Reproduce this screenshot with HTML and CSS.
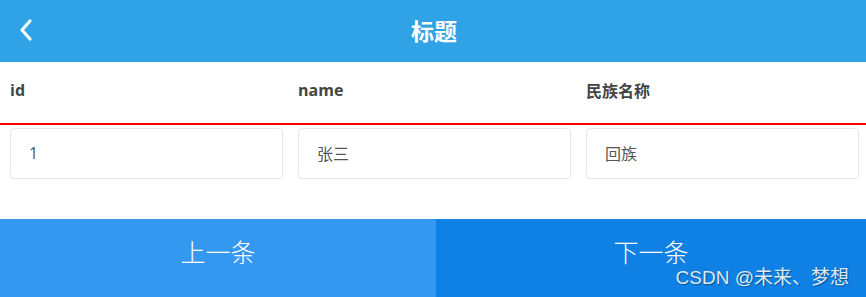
FILE: index.html
```html
<!DOCTYPE html>
<html lang="zh">
<head>
<meta charset="utf-8">
<link rel="stylesheet" href="styles.css">
</head>
<body>
<div class="page">
  <header class="nav">
    <svg class="back" width="16" height="24" viewBox="0 0 16 24"><path d="M12 3 L4 12 L12 21" fill="none" stroke="#fff" stroke-width="3.2" stroke-linecap="round" stroke-linejoin="round"/></svg>
    <h1 class="title">标题</h1>
  </header>
  <div class="thead">
    <div class="th">id</div>
    <div class="th">name</div>
    <div class="th">民族名称</div>
  </div>
  <div class="trow">
    <div class="cell"><div class="field">1</div></div>
    <div class="cell"><div class="field">张三</div></div>
    <div class="cell"><div class="field">回族</div></div>
  </div>
  <div class="spacer"></div>
  <footer class="actions">
    <button class="btn prev">上一条</button>
    <button class="btn next">下一条</button>
    <span class="watermark">CSDN @未来、梦想</span>
  </footer>
</div>
</body>
</html>
```
FILE: styles.css
```css
html, body {
  margin: 0;
  padding: 0;
  background: #fff;
  font-family: "Open Sans", "Noto Sans CJK SC", sans-serif;
}
.page {
  width: 866px;
  height: 297px;
  display: flex;
  flex-direction: column;
  overflow: hidden;
}
.nav {
  height: 62px;
  background: #2fa3e6;
  display: flex;
  align-items: center;
  justify-content: center;
  position: relative;
}
.back {
  position: absolute;
  left: 18px;
  top: 18px;
}
.title {
  margin: 0 0 2px 2px;
  color: #fff;
  font-size: 23px;
  font-weight: bold;
  font-family: "Noto Sans CJK SC", sans-serif;
}
.thead {
  height: 61px;
  display: grid;
  grid-template-columns: 288px 288px 290px;
  align-items: center;
  border-bottom: 2px solid #ff0000;
}
.th {
  padding-left: 10px;
  font-size: 16px;
  font-weight: bold;
  color: #444;
  padding-bottom: 6px;
}
.trow {
  display: grid;
  grid-template-columns: 288px 288px 290px;
  padding-top: 3px;
}
.cell {
  padding: 0 5px 0 10px;
}
.cell:last-child {
  padding-right: 7px;
}
.field {
  border: 1px solid #e6e6e6;
  border-radius: 4px;
  box-sizing: border-box;
  height: 51px;
  display: flex;
  align-items: center;
  padding-left: 18px;
  padding-bottom: 1px;
  font-size: 16px;
  color: #555;
  box-shadow: 0 0 2px rgba(0,0,0,0.04);
}
.spacer {
  flex: 1;
}
.actions {
  height: 78px;
  display: flex;
  position: relative;
}
.btn {
  border: none;
  margin: 0;
  padding: 0 0 14px 0;
  color: #fff;
  font-size: 25px;
  font-family: "Noto Sans CJK SC", sans-serif;
  font-weight: 300;
}
.prev {
  width: 436px;
  background: #3598f0;
}
.next {
  flex: 1;
  background: #0f80e4;
}
.watermark {
  position: absolute;
  right: 17px;
  bottom: 8px;
  font-size: 19px;
  color: #dfe8f2;
  text-shadow: 1px 1px 1px rgba(0,0,0,0.35);
  font-family: "Liberation Sans", "Noto Sans CJK SC", sans-serif;
}
```
